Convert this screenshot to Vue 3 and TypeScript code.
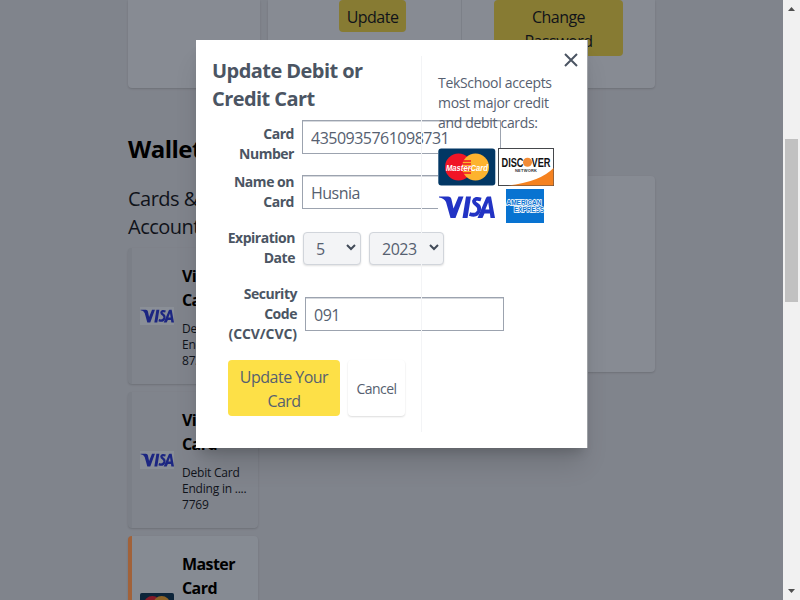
<script setup lang="ts">
import { ref } from 'vue'

interface WalletCard {
  name: string
  ending: string
  brand: 'visa' | 'master'
  active: boolean
}

const wallet: WalletCard[] = [
  { name: 'Visa', ending: '8731', brand: 'visa', active: false },
  { name: 'Visa', ending: '7769', brand: 'visa', active: false },
  { name: 'Master', ending: '', brand: 'master', active: true },
]

const cardNumber = ref('4350935761098731')
const cardName = ref('Husnia')
const code = ref('091')
</script>

<template>
  <div class="screen">
    <div class="page">
      <div class="profile-row">
        <section class="panel avatar-panel"></section>
        <section class="panel account-panel">
          <div class="account-col first"><button class="dim-btn">Update</button></div>
          <div class="account-col second"><button class="dim-btn wide">Change<br />Password</button></div>
        </section>
      </div>
      <h1 class="wallet-title">Wallet</h1>
      <div class="wallet-grid">
        <div>
          <h2 class="accounts-title">Cards &amp;<br />Accounts</h2>
          <div class="card-list">
            <article v-for="card in wallet" :key="card.ending" class="wallet-card" :class="{ active: card.active }">
              <svg v-if="card.brand === 'visa'" class="mini-logo" viewBox="0 5 58 30" preserveAspectRatio="none">
                <rect y="5" width="58" height="30" fill="#8a8f97" />
                <g fill="#1c2682">
                  <path d="M1 9.500h9q3 0 3.500 3l2 9 5-12h5L17.500 31h-5L8 15Q6 11 1 10.500Z" />
                  <path d="M28 9.500h5L29.500 31h-5z" />
                  <path d="M43.500 12.500q-6-2-7 1.500 0 2 2.500 3.500 3.500 2 2.500 6-2 6-9.500 3.500" fill="none" stroke="#1c2682" stroke-width="3.800" />
                  <path fill-rule="evenodd" d="M50.500 9.500h3.500L58 31h-4.500l-.6-4.500h-5.400l-2 4.500h-5l8.500-20q.6-1.500 1.500-1.500Zm.7 6-2.800 7h3.900z" />
                </g>
              </svg>
              <svg v-else class="mini-logo master" viewBox="0 0 58 38" preserveAspectRatio="none">
                <rect width="58" height="38" rx="3" fill="#0c2439" />
                <circle cx="21" cy="19" r="14" fill="#851a28" />
                <circle cx="37" cy="19" r="14" fill="#8c6327" />
              </svg>
              <div class="wallet-info">
                <h3>{{ card.name }}<br />Card</h3>
                <p v-if="card.ending">Debit Card<br />Ending in ....<br />{{ card.ending }}</p>
                <p v-else></p>
              </div>
            </article>
          </div>
        </div>
        <section class="panel side-panel"></section>
      </div>
    </div>

    <div class="scrollbar">
      <svg width="17" height="17" viewBox="0 0 17 17"><path d="M5 11h7L8.500 7z" fill="#505050" /></svg>
      <div class="track"><div class="thumb"></div></div>
      <svg width="17" height="17" viewBox="0 0 17 17"><path d="M5 6h7L8.500 10z" fill="#505050" /></svg>
    </div>

    <div class="modal">
      <div class="form-side">
        <h2 class="modal-title">Update Debit or<br />Credit Cart</h2>
        <div class="field number">
          <label>Card<br />Number</label>
          <input v-model="cardNumber" type="text" />
        </div>
        <div class="field name">
          <label>Name on<br />Card</label>
          <input v-model="cardName" type="text" />
        </div>
        <div class="field expiry">
          <label>Expiration<br />Date</label>
          <div class="select month">
            <span>5</span>
            <svg width="10" height="7" viewBox="0 0 10 7"><path d="M1 1l4 4 4-4" fill="none" stroke="#414a58" stroke-width="2" /></svg>
          </div>
          <div class="select year">
            <span>2023</span>
            <svg width="10" height="7" viewBox="0 0 10 7"><path d="M1 1l4 4 4-4" fill="none" stroke="#414a58" stroke-width="2" /></svg>
          </div>
        </div>
        <div class="field security">
          <label>Security<br />Code<br /><span class="abbr">(CCV/CVC)</span></label>
          <input v-model="code" type="text" />
        </div>
        <div class="actions">
          <button class="submit">Update Your<br />Card</button>
          <button class="cancel">Cancel</button>
        </div>
      </div>
      <div class="brand-side">
        <p>TekSchool accepts<br />most major credit<br />and debit cards:</p>
        <div class="brands">
          <svg width="58" height="38" viewBox="0 0 58 38">
            <rect x=".3" y=".5" width="57" height="37" rx="3" fill="#023764" />
            <circle cx="20.500" cy="19" r="13.500" fill="#f01526" />
            <circle cx="37.500" cy="19" r="13.500" fill="#fdb32e" />
            <path d="M25 13h8M24 16h9M24 19h10M24 22h9M25 25h8" stroke="#f01526" stroke-width="1.500" />
            <text x="8" y="22.500" textLength="42" lengthAdjust="spacingAndGlyphs" class="master-word">MasterCard</text>
          </svg>
          <svg width="56" height="38" viewBox="0 0 56 38">
            <rect x=".5" y=".5" width="55" height="37" fill="#fff" stroke="#45474b" />
            <path d="M10 37.500Q42 34 55.500 20V37.500Z" fill="#f58220" />
            <circle cx="29.500" cy="14.300" r="4.500" fill="#f28b35" />
            <text x="3.500" y="18.700" textLength="22" lengthAdjust="spacingAndGlyphs" class="discover-word">DISC</text>
            <text x="33.500" y="18.700" textLength="19" lengthAdjust="spacingAndGlyphs" class="discover-word">VER</text>
            <text x="17" y="24" textLength="22" class="network-word">NETWORK</text>
          </svg>
          <svg width="58" height="36" viewBox="0 0 58 36">
            <g fill="#2233c4">
              <path d="M1 9.500h9q3 0 3.500 3l2 9 5-12h5L17.500 31h-5L8 15Q6 11 1 10.500Z" />
              <path d="M28 9.500h5L29.500 31h-5z" />
              <path d="M43 12.500q-6-2-7 1.500 0 2 2.500 3.500 3.500 2 2.500 6-2 6-9.500 3.500" fill="none" stroke="#2233c4" stroke-width="3.800" />
              <path fill-rule="evenodd" d="M49.500 9.500h3.500L57 31h-4.500l-.6-4.500h-5.400l-2 4.500h-5l8.500-20q.6-1.500 1.500-1.500Zm.7 6-2.800 7h3.900z" />
            </g>
          </svg>
          <svg width="56" height="36" viewBox="0 0 56 36">
            <rect x="8" y="2" width="38" height="34" fill="#0873d1" />
            <text x="8.500" y="18" textLength="35" lengthAdjust="spacingAndGlyphs" class="amex-word">AMERICAN</text>
            <text x="16" y="25" textLength="30" lengthAdjust="spacingAndGlyphs" class="amex-word">EXPRESS</text>
          </svg>
        </div>
      </div>
      <svg class="close" width="14" height="14" viewBox="0 0 14 14"><path d="M1 1l12 12M13 1L1 13" stroke="#4b5563" stroke-width="2" /></svg>
    </div>
  </div>
</template>

<style>
body { margin: 0; overflow: hidden; }
</style>

<style scoped>
* { box-sizing: border-box; }
h1, h2, h3, p { margin: 0; }
button, input { font: inherit; letter-spacing: inherit; color: inherit; }
.screen {
  position: relative;
  display: flex;
  width: 800px;
  height: 600px;
  overflow: hidden;
  font-family: 'Open Sans', 'Noto Sans', sans-serif;
  font-size: 16px;
  font-weight: 400;
  line-height: 24px;
  letter-spacing: -0.032em;
}
.page { flex: 1; height: 600px; padding: 0 128px; background: #80848c; color: #10131a; overflow: hidden; }
.panel { background: #878b93; box-shadow: 0 1px 2px rgba(0, 0, 0, 0.15); }
.profile-row { display: flex; gap: 8px; height: 88px; }
.avatar-panel { width: 132px; border-radius: 0 0 4px 4px; }
.account-panel { display: flex; flex: 1; border-radius: 0 0 4px 4px; }
.account-col { display: flex; align-items: flex-start; }
.first { width: 194px; padding-left: 71px; border-right: 1px solid #7c8088; }
.second { padding-left: 32px; }
.dim-btn { width: 67px; height: 32px; padding: 5px 0 3px; border: 0; border-radius: 4px; background: #877b33; line-height: 24px; }
.dim-btn.wide { width: 129px; height: 56px; }
.wallet-title { margin-top: 45px; font-size: 24px; line-height: 32px; font-weight: 700; color: #000; }
.wallet-grid { display: flex; gap: 16px; margin-top: 11px; }
.accounts-title { width: 131px; margin-top: 9px; font-size: 20px; line-height: 28px; font-weight: 400; }
.card-list { display: flex; flex-direction: column; gap: 8px; margin-top: 7px; }
.wallet-card {
  display: flex;
  align-items: center;
  width: 130px;
  height: 136px;
  padding-left: 8px;
  border-left: 4px solid #7b7f87;
  border-radius: 4px;
  background: #80848c;
  box-shadow: 0 1px 2px rgba(0, 0, 0, 0.15);
}
.wallet-card.active { border-left-color: #a1623a; background: #868b93; }
.mini-logo { flex: none; width: 34px; height: 18px; margin-right: 8px; }
.mini-logo.master { height: 22px; }
.wallet-info h3 { font-size: 16px; line-height: 24px; font-weight: 700; letter-spacing: -0.036em; color: #000; }
.wallet-info p { height: 48px; margin-top: 8px; padding-top: 1px; font-size: 12px; line-height: 16px; letter-spacing: -0.018em; white-space: nowrap; }
.side-panel { flex: 1; height: 196px; border-radius: 4px; }
.scrollbar { display: flex; flex-direction: column; width: 17px; background: #f1f1f1; }
.scrollbar svg { display: block; }
.track { flex: 1; padding: 122px 2px 0; }
.thumb { height: 163px; background: #c1c1c1; }

.modal {
  position: absolute;
  top: 40px;
  left: 196px;
  display: flex;
  width: 391px;
  height: 408px;
  padding: 16px;
  background: #fff;
  color: #566070;
  box-shadow: 0 20px 25px -5px rgba(0, 0, 0, 0.14), 0 8px 10px -4px rgba(0, 0, 0, 0.15), 1px 0 0 #aaadb2;
}
.form-side { width: 210px; flex: none; }
.modal-title { padding-top: 1px; font-size: 20px; line-height: 28px; font-weight: 700; letter-spacing: -0.028em; color: #4b5563; }
.field { display: flex; align-items: flex-start; }
.field label { flex: none; font-size: 14px; line-height: 20px; font-weight: 700; letter-spacing: -0.034em; text-align: right; color: #4b5563; }
.field label .abbr { letter-spacing: -0.005em; }
.field input {
  flex: none;
  width: 199px;
  height: 34px;
  padding: 1px 8px 0;
  border: 1px solid #9ca3af;
  border-radius: 0;
  background: #fff;
  box-shadow: inset 0 1px 0 #d6d9de;
  outline: none;
}
.number { padding-top: 11px; height: 55px; }
.name { padding-top: 4px; height: 56px; }
.number label, .name label { width: 82px; margin-right: 8px; }
.number input { margin-top: -4px; }
.name input { margin-top: 3px; }
.expiry { height: 56px; padding-top: 4px; }
.expiry label { width: 83px; margin-right: 8px; }
.select {
  display: flex;
  flex: none;
  align-items: center;
  justify-content: space-between;
  height: 33px;
  margin-top: 4px;
  padding: 1px 4px 0 12px;
  border: 1px solid #d1d5db;
  border-radius: 4px;
  background: #f3f4f6;
  box-shadow: 0 1px 2px rgba(0, 0, 0, 0.12);
}
.select svg { margin-top: -3px; }
.month { width: 58px; margin-right: 8px; }
.year { width: 75px; }
.security { height: 80px; padding-top: 4px; }
.security label { width: 85px; margin-right: 8px; }
.security input { margin-top: 13px; }
.actions { display: flex; gap: 8px; padding-left: 16px; }
.submit { width: 112px; height: 56px; padding: 5px 0 3px; border: 0; border-radius: 4px; background: #fde047; line-height: 24px; }
.cancel { width: 57px; height: 56px; padding: 1px 0 0; border: 0; border-radius: 4px; background: #fff; font-size: 14px; box-shadow: 0 1px 2px rgba(0, 0, 0, 0.14); }
.brand-side { position: relative; flex: 1; padding: 16px 0 0 16px; margin-left: -1px; border-left: 1px solid #f3f4f6; white-space: nowrap; }
.brand-side p { padding-top: 1px; font-size: 14px; line-height: 20px; letter-spacing: -0.023em; }
.brands { display: grid; grid-template-columns: 58px 56px; column-gap: 2px; row-gap: 1px; margin-top: 15px; background: #fff; }
.brands svg { display: block; }
.close { position: absolute; top: 13px; right: 9px; }
.master-word { font: italic 700 9.5px 'Liberation Sans', sans-serif; fill: #fff; letter-spacing: 0; }
.discover-word { font: 700 12.5px 'Liberation Sans', sans-serif; fill: #111; letter-spacing: 0; }
.network-word { font: 700 4px 'Liberation Sans', sans-serif; fill: #333; letter-spacing: 0; }
.amex-word { font: 700 7px 'Liberation Sans', sans-serif; fill: #0873d1; stroke: #fff; stroke-width: 1.5px; paint-order: stroke; letter-spacing: 0; }
</style>
